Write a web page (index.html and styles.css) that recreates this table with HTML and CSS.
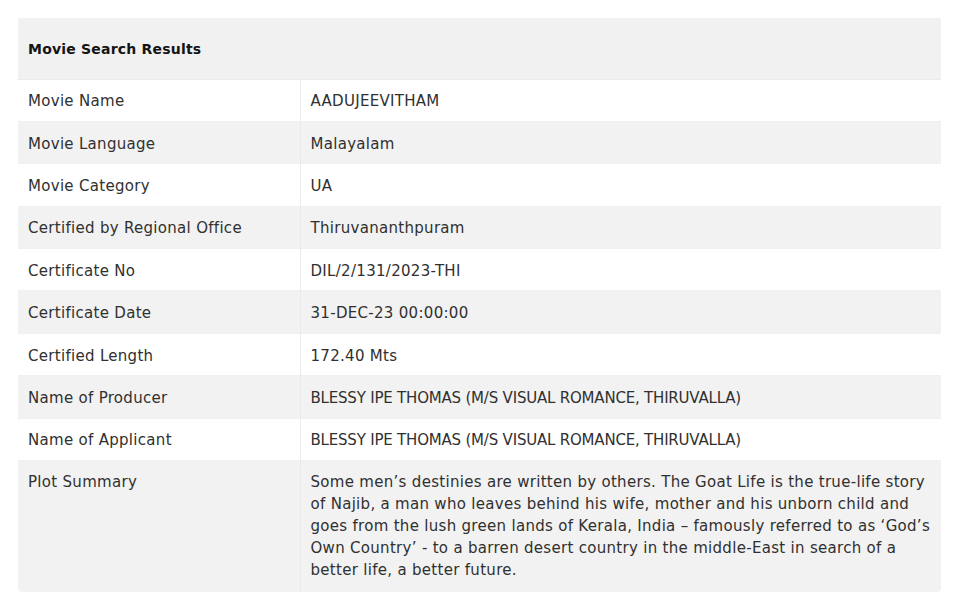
FILE: index.html
```html
<!DOCTYPE html>
<html lang="en">
<head>
  <meta charset="utf-8">
  <title>Movie Search Results</title>
  <link rel="stylesheet" href="styles.css">
</head>
<body>
  <table class="results">
    <thead>
      <tr>
        <th colspan="2">Movie Search Results</th>
      </tr>
    </thead>
    <tbody>
      <tr><td>Movie Name</td><td>AADUJEEVITHAM</td></tr>
      <tr><td>Movie Language</td><td>Malayalam</td></tr>
      <tr><td>Movie Category</td><td>UA</td></tr>
      <tr><td>Certified by Regional Office</td><td>Thiruvananthpuram</td></tr>
      <tr><td>Certificate No</td><td>DIL/2/131/2023-THI</td></tr>
      <tr><td>Certificate Date</td><td>31-DEC-23 00:00:00</td></tr>
      <tr><td>Certified Length</td><td>172.40 Mts</td></tr>
      <tr><td>Name of Producer</td><td class="caps">BLESSY IPE THOMAS (M/S VISUAL ROMANCE, THIRUVALLA)</td></tr>
      <tr><td>Name of Applicant</td><td class="caps">BLESSY IPE THOMAS (M/S VISUAL ROMANCE, THIRUVALLA)</td></tr>
      <tr class="plot">
        <td>Plot Summary</td>
        <td>Some men’s destinies are written by others. The Goat Life is the true-life story of Najib, a man who leaves behind his wife, mother and his unborn child and goes from the lush green lands of Kerala, India – famously referred to as ‘God’s Own Country’ - to a barren desert country in the middle-East in search of a better life, a better future.</td>
      </tr>
    </tbody>
  </table>
</body>
</html>
```

FILE: styles.css
```css
*, *::before, *::after {
  margin: 0;
  padding: 0;
  box-sizing: border-box;
}

body {
  padding: 18px 20px 10px 18px;
  background-color: #FFFFFF;
  color: #303030;
  font-size: 15px;
  font-family: "DejaVu Sans", sans-serif;
  letter-spacing: 0.3px;
}

.results {
  width: 923px;
  border-collapse: collapse;
  border-radius: 0 0 4px 4px;
  overflow: hidden;
}

.results th {
  height: 61px;
  padding: 2px 10px 0;
  background-color: #F1F1F1;
  color: #141414;
  font-size: 14px;
  font-weight: 700;
  letter-spacing: 0.2px;
  text-align: left;
  border-bottom: 1px solid #EAEAEA;
}

.results td {
  height: 42.4px;
  padding: 2px 10px 0;
  border-top: 1px solid #F0F0F0;
  vertical-align: middle;
  line-height: 22px;
}

.results td:first-child {
  width: 282px;
  border-right: 1px solid #EBEBEB;
}

.results .caps {
  letter-spacing: -0.2px;
}

.results tbody tr:nth-child(odd) td {
  background-color: #FFFFFF;
}

.results tbody tr:nth-child(even) td {
  background-color: #F2F2F2;
}

.plot td {
  vertical-align: top;
  padding-top: 10px;
  padding-bottom: 11px;
}
```
